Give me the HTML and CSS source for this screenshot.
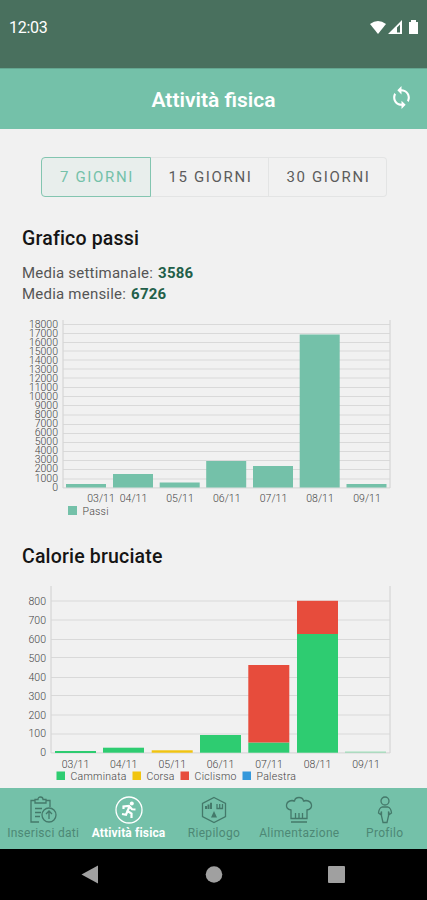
FILE: index.html
```html
<!DOCTYPE html>
<html lang="it">
<head>
    <meta charset="UTF-8">
    <meta name="viewport" content="width=device-width, initial-scale=1.0">
    <title>Attività fisica</title>
    <link rel="stylesheet" href="styles.css">
</head>
<body>
    <div class="status-bar">
        <span class="clock">12:03</span>
        <svg class="status-icons" width="50" height="16" viewBox="0 0 50 16">
            <path d="M1 4Q9 -2 17 4L9 14Z"/>
            <path fill-rule="evenodd" d="M19 14L33 0V14ZM28 7.500V12.500H31V4.500Z"/>
            <path d="M40 2H42V0H47V2H49V14H40Z"/>
        </svg>
    </div>
    <header class="app-bar">
        <h1>Attività fisica</h1>
        <svg class="sync" width="25" height="25" viewBox="0 0 24 24">
            <path d="M12 4V1L8 5l4 4V6c3.310 0 6 2.690 6 6 0 1.010-.25 1.970-.7 2.800l1.460 1.460C19.540 15.030 20 13.570 20 12c0-4.420-3.580-8-8-8zm0 14c-3.310 0-6-2.690-6-6 0-1.010.25-1.970.7-2.800L5.240 7.740C4.460 8.970 4 10.430 4 12c0 4.420 3.580 8 8 8v3l4-4-4-4v3z"/>
        </svg>
    </header>
    <main class="content">
        <div class="tabs">
            <button class="tab active">7 GIORNI</button>
            <button class="tab">15 GIORNI</button>
            <button class="tab">30 GIORNI</button>
        </div>

        <h2>Grafico passi</h2>
        <div class="averages">
            <p>Media settimanale: <b>3586</b></p>
            <p>Media mensile: <b>6726</b></p>
        </div>
        <svg class="chart" width="427" height="210" viewBox="0 0 427 210">
            <path class="grid" d="M63 14.500H390M63 23.500H390M63 32.500H390M63 41H390M63 50H390M63 59H390M63 68H390M63 77.500H390M63 86.500H390M63 95.500H390M63 105H390M63 114.500H390M63 123.500H390M63 132.500H390M63 141.500H390M63 150.500H390M63 159.500H390M63 169H390M63 177.800H390"/>
            <path class="axis" d="M63 10V178M390 10V178"/>
            <g class="steps">
                <rect x="66" y="174" width="40" height="3.500"/>
                <rect x="113" y="164" width="40" height="13.500"/>
                <rect x="159.700" y="172.500" width="40" height="5"/>
                <rect x="206.200" y="151" width="40" height="26.500"/>
                <rect x="253" y="156" width="40" height="21.500"/>
                <rect x="299.700" y="24.500" width="40" height="153"/>
                <rect x="346.500" y="174" width="40" height="3.500"/>
            </g>
            <g class="labels end">
                <text x="58" y="17.500">18000</text>
                <text x="58" y="26.500">17000</text>
                <text x="58" y="35.600">16000</text>
                <text x="58" y="44.600">15000</text>
                <text x="58" y="53.700">14000</text>
                <text x="58" y="62.700">13000</text>
                <text x="58" y="71.800">12000</text>
                <text x="58" y="80.900">11000</text>
                <text x="58" y="90">10000</text>
                <text x="58" y="99">9000</text>
                <text x="58" y="108">8000</text>
                <text x="58" y="117.100">7000</text>
                <text x="58" y="126.200">6000</text>
                <text x="58" y="135.200">5000</text>
                <text x="58" y="144.300">4000</text>
                <text x="58" y="153.300">3000</text>
                <text x="58" y="162.400">2000</text>
                <text x="58" y="171.500">1000</text>
                <text x="58" y="180.500">0</text>
            </g>
            <g class="labels middle">
                <text x="101" y="192">03/11</text>
                <text x="133.500" y="192">04/11</text>
                <text x="180" y="192">05/11</text>
                <text x="226.800" y="192">06/11</text>
                <text x="273.500" y="192">07/11</text>
                <text x="320" y="192">08/11</text>
                <text x="367" y="192">09/11</text>
            </g>
            <rect class="steps" x="68" y="196" width="9" height="9"/>
            <text class="labels" x="82.500" y="204.500" textLength="26">Passi</text>
        </svg>

        <h2 class="second">Calorie bruciate</h2>
        <svg class="chart" width="427" height="210" viewBox="0 0 427 210">
            <path class="grid" d="M51 23H390M51 42H390M51 61.500H390M51 79.500H390M51 99.500H390M51 117.500H390M51 137H390M51 156H390M51 174.800H390"/>
            <path class="axis" d="M51 8V175M390 8V175"/>
            <g class="walk">
                <rect x="55" y="173" width="41" height="2"/>
                <rect x="103" y="169.700" width="41" height="5"/>
                <rect x="200" y="157" width="41" height="17.700"/>
                <rect x="248.300" y="164.500" width="41" height="10.200"/>
                <rect x="297" y="56" width="41" height="118.700"/>
                <rect class="faint" x="345" y="173.500" width="41" height="1.200"/>
            </g>
            <rect class="run" x="151.700" y="172.300" width="41" height="2.400"/>
            <g class="bike">
                <rect x="248.300" y="87" width="41" height="77.500"/>
                <rect x="297" y="22.800" width="41" height="33.200"/>
            </g>
            <g class="labels end">
                <text x="46" y="26.800">800</text>
                <text x="46" y="45.700">700</text>
                <text x="46" y="64.700">600</text>
                <text x="46" y="83.600">500</text>
                <text x="46" y="102.600">400</text>
                <text x="46" y="121.500">300</text>
                <text x="46" y="140.500">200</text>
                <text x="46" y="159.400">100</text>
                <text x="46" y="178.300">0</text>
            </g>
            <g class="labels middle">
                <text x="75.500" y="189.500">03/11</text>
                <text x="123.700" y="189.500">04/11</text>
                <text x="172.300" y="189.500">05/11</text>
                <text x="220.500" y="189.500">06/11</text>
                <text x="269" y="189.500">07/11</text>
                <text x="317.500" y="189.500">08/11</text>
                <text x="366" y="189.500">09/11</text>
            </g>
            <rect class="walk" x="56.500" y="193.500" width="8.500" height="8.500"/>
            <rect class="run" x="132.500" y="193.500" width="8.500" height="8.500"/>
            <rect class="bike" x="180.500" y="193.500" width="8.500" height="8.500"/>
            <rect class="gym" x="242.500" y="193.500" width="8.500" height="8.500"/>
            <g class="labels">
                <text x="70.500" y="202" textLength="56">Camminata</text>
                <text x="146.500" y="202" textLength="28">Corsa</text>
                <text x="194.500" y="202" textLength="42">Ciclismo</text>
                <text x="256.500" y="202" textLength="39.500">Palestra</text>
            </g>
        </svg>
    </main>

    <nav class="bottom-nav">
        <a class="item">
            <svg width="28" height="28" viewBox="0 0 28 28">
                <path d="M10 26H2V4.500H6M17 4.500H21V11M6 7V3.500H9Q9 1 11.500 1T14 3.500H17V7ZM6 12.500H13M6 16.500H12M6 20.500H11"/>
                <circle cx="20" cy="19" r="7"/>
                <path d="M20 23V15M17 18L20 15L23 18"/>
            </svg>
            <span>Inserisci dati</span>
        </a>
        <a class="item current">
            <svg width="28" height="28" viewBox="0 0 28 28">
                <circle cx="14" cy="14" r="13"/>
                <circle class="solid" cx="16.800" cy="7.600" r="2"/>
                <path class="runner" d="M8.500 13V10.500L14 10L17 13.300L20.500 13.500M14.500 10.500L12.500 15L16.500 17.500V22M12.500 15L11 18.800L7 18"/>
            </svg>
            <span>Attività fisica</span>
        </a>
        <a class="item">
            <svg width="28" height="28" viewBox="0 0 28 28">
                <path d="M14 1.500L25.500 7.500V20.500L14 26.500L2.500 20.500V7.500Z"/>
                <path class="solid" d="M5 13V10H7V13ZM7.500 13V8.500H9.500V13ZM10 13V6.800H12V13ZM14 15L17 21.500H11Z"/>
                <path d="M17 8V12.500H22.500V8M19.700 8V12"/>
            </svg>
            <span>Riepilogo</span>
        </a>
        <a class="item">
            <svg width="28" height="28" viewBox="0 0 28 28">
                <path d="M6 22.500V14Q1 13 1.500 9T7 4.500Q9 5 9.500 5Q10 1.500 14 1.500T18.500 5Q19 5 21 4.500Q26 5 26.500 9T22 14V22.500ZM10.500 22V17M14 22V17M17.500 22V17M6 26H22"/>
            </svg>
            <span>Alimentazione</span>
        </a>
        <a class="item">
            <svg width="28" height="28" viewBox="0 0 28 28">
                <circle cx="14" cy="5" r="4"/>
                <path d="M11 11H17Q20 12 20.500 17L18.500 18.500L17.500 15.500V20L16 26.500H12L10.500 20V15.500L9.500 18.500L7.500 17Q8 12 11 11Z"/>
            </svg>
            <span>Profilo</span>
        </a>
    </nav>
    <div class="system-nav">
        <svg width="427" height="51" viewBox="0 0 427 51">
            <path d="M81.500 25.500L98 16.500V34.500Z"/>
            <circle cx="214" cy="25.500" r="8.300"/>
            <rect x="328" y="17" width="17" height="17" rx="1"/>
        </svg>
    </div>
</body>
</html>
```
FILE: styles.css
```css
body, html {
    margin: 0;
    padding: 0;
    height: 900px;
    overflow: hidden;
    font-family: Roboto, "Liberation Sans", sans-serif;
    background: #f1f1f1;
}
body {
    width: 427px;
    display: flex;
    flex-direction: column;
}
svg {
    display: block;
    flex: none;
}
.status-bar {
    height: 68px;
    flex: none;
    box-sizing: border-box;
    padding: 18px 8px 0 9px;
    display: flex;
    justify-content: space-between;
    background: #49705e;
    color: #fff;
    font-size: 16px;
    line-height: 20px;
}
.status-bar svg {
    fill: #fff;
}
.clock {
    letter-spacing: -0.3px;
}
.status-icons {
    margin-top: 2px;
}
.app-bar {
    height: 61px;
    flex: none;
    box-sizing: border-box;
    padding: 0 13px 0 38px;
    display: flex;
    align-items: center;
    background: #74c1a9;
    border-top: 1px solid #64a791;
    color: #fff;
}
.app-bar h1 {
    flex: 1;
    margin: 2px 0 0;
    text-align: center;
    font-size: 21px;
    line-height: 30px;
    font-weight: 600;
}
.app-bar svg {
    fill: #fff;
}
.app-bar .sync {
    margin-bottom: 3px;
}
.content {
    flex: none;
    height: 659px;
    overflow: hidden;
}
.tabs {
    display: flex;
    width: 346px;
    height: 40px;
    margin: 28px 0 0 41px;
}
.tab {
    flex: 1;
    padding: 0 0 0 2px;
    border: 1px solid #e3e4e4;
    border-left: 0;
    background: transparent;
    color: #5c5c5c;
    font: 400 15px Roboto, sans-serif;
    letter-spacing: 1.65px;
}
.tab.active {
    flex: 0 0 110px;
    box-sizing: border-box;
    border: 1px solid #83c5b0;
    border-radius: 4px 0 0 4px;
    background: #e8eeec;
    color: #74c1a9;
}
.tab:last-child {
    border-radius: 0 4px 4px 0;
}
h2 {
    margin: 30px 0 0 22px;
    font-size: 19.5px;
    line-height: 24px;
    font-weight: 500;
    letter-spacing: 0.18px;
    color: #151515;
}
.averages {
    margin: 12px 0 0 22px;
    font-size: 15px;
    line-height: 21px;
    letter-spacing: 0.22px;
    color: #555;
}
.averages p {
    margin: 0;
}
.averages b {
    margin-left: 1px;
    font-weight: 700;
    color: #225f49;
}
.chart {
    margin-top: 5px;
}
h2.second {
    margin-top: 25px;
}
.second + .chart {
    margin-top: 9px;
}
.grid {
    stroke: #d9d9d9;
    stroke-width: 1.2;
}
.axis {
    stroke: #d6d6d6;
    stroke-width: 1.2;
}
.labels {
    font-size: 10.5px;
    font-weight: 300;
    fill: #444;
}
.end {
    text-anchor: end;
}
.middle {
    text-anchor: middle;
}
.steps {
    fill: #74c1a9;
}
.walk {
    fill: #2ecc71;
}
.run {
    fill: #f1c40f;
}
.bike {
    fill: #e74c3c;
}
.gym {
    fill: #3498db;
}
.faint {
    opacity: 0.4;
}
.bottom-nav {
    height: 61px;
    flex: none;
    display: flex;
    background: #74c1a9;
}
.item {
    width: 85.4px;
    flex: none;
    box-sizing: border-box;
    display: flex;
    flex-direction: column;
    align-items: center;
    padding: 8px 0 0 1px;
    color: #4d8875;
    font-size: 12px;
    line-height: 16px;
    letter-spacing: 0.3px;
    white-space: nowrap;
}
.item svg {
    margin-bottom: 1px;
    fill: none;
    stroke: #44796a;
    stroke-width: 1.3;
}
.item .solid {
    fill: #44796a;
    stroke: none;
}
.current {
    color: #fff;
    font-weight: 700;
    letter-spacing: 0.15px;
}
.current svg {
    stroke: #fff;
}
.current .solid {
    fill: #fff;
}
.current .runner {
    stroke-width: 2.2;
}
.system-nav {
    flex: 1;
    background: #000;
}
.system-nav svg {
    fill: #a0a0a0;
}
```
